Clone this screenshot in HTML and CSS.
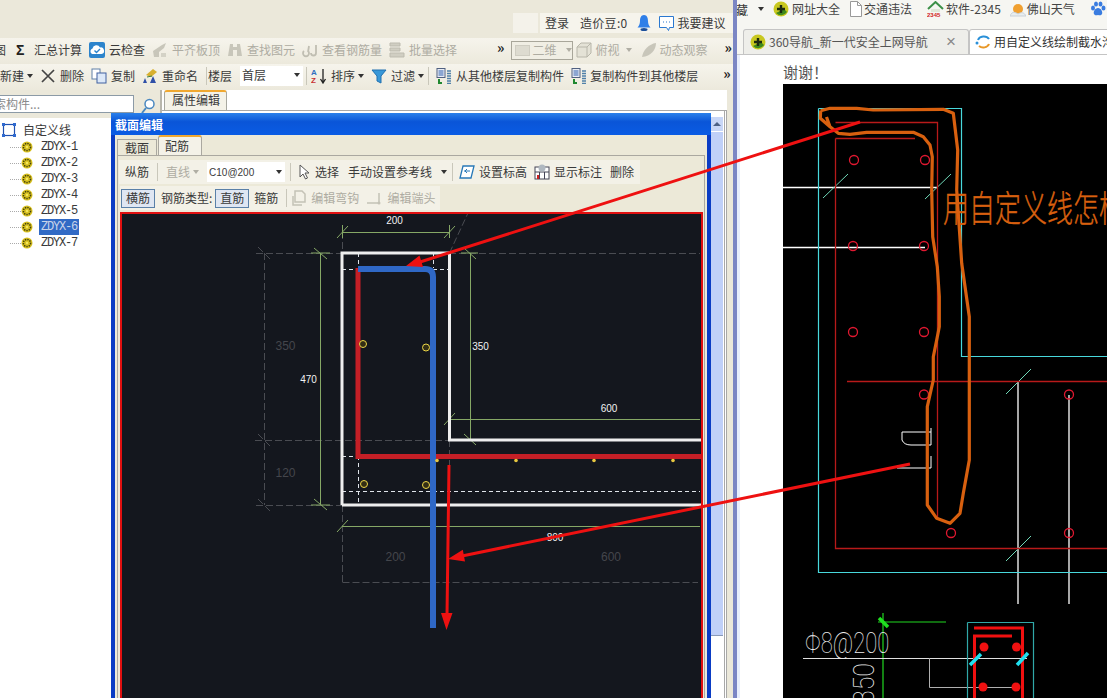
FILE: index.html
```html
<!DOCTYPE html>
<html lang="zh">
<head>
<meta charset="utf-8">
<title>截面编辑</title>
<link rel="stylesheet" href="styles.css">
</head>
<body>
<svg class="defs" width="0" height="0">
  <symbol id="gear" viewBox="0 0 12 12"><circle cx="6" cy="6" r="5.500" fill="#d8c020"/><circle cx="6" cy="6" r="3.600" fill="none" stroke="#40400c" stroke-width="1.500" stroke-dasharray="1.400 1"/><circle cx="6" cy="6" r="1.200" fill="#f4e860"/></symbol>
  <symbol id="nav360" viewBox="0 0 16 16"><circle cx="8" cy="8" r="7.500" fill="#c8c820"/><path d="M3 12a7 7 0 0 0 11-1l-3-3z" fill="#3f8a1c"/><path d="M8 4v8M4 8h8" stroke="#1c2a10" stroke-width="2.400"/></symbol>
  <symbol id="floors" viewBox="0 0 16 16"><rect x="1" y="0.500" width="8" height="9" fill="#e8ecf4" stroke="#506080"/><path d="M2.500 3h5M2.500 5h5M2.500 7h5" stroke="#3060b0"/><path d="M11 3h4M11 5.500h4M11 8h4M11 10.500h4M11 13h4M11 15.500h4" stroke="#5080a8" stroke-width="1.300"/><path d="M3 11v4h3" stroke="#208830" stroke-width="2" fill="none"/></symbol>
</svg>

<div class="app">
  <div class="app-top">
    <span class="top-blank"></span>
    <div class="top-bar">
      <span class="login">登录</span>
      <span class="beans">造价豆:0</span>
      <svg class="bell" width="14" height="18" viewBox="0 0 14 18"><path d="M7 1C4 1 3 4 3 7c0 3-1 5-2.500 6.500h13C12 12 11 10 11 7c0-3-1-6-4-6z" fill="#2f7fe8"/><ellipse cx="7" cy="15.500" rx="3.500" ry="1.500" fill="#1b4f9a"/></svg>
      <svg class="bubble" width="17" height="17" viewBox="0 0 17 17"><path d="M1.500 1.500h14v11h-4l-1 3-2-3h-7z" fill="#fff" stroke="#2a78d0"/><path d="M5 7h1M8 7h1M11 7h1" stroke="#2a78d0"/></svg>
      <span>我要建议</span>
    </div>
  </div>

  <div class="toolbar tb-one">
    <span class="clipped-left">图</span>
    <span class="tool"><span class="sigma">Σ</span><span class="tool-text-wide">汇总计算</span></span>
    <span class="tool"><svg width="16" height="16" viewBox="0 0 16 16"><rect width="16" height="16" rx="2" fill="#2c84cc"/><path d="M3 12a3 3 0 0 1 .5-5.500A4 4 0 0 1 11 5.500a3.200 3.200 0 0 1 1.500 6.500z" fill="#fff"/><path d="M5.500 8.500l2 2 3.500-3.500" stroke="#2c84cc" stroke-width="1.400" fill="none"/></svg><span>云检查</span></span>
    <span class="tool off"><svg width="16" height="16" viewBox="0 0 16 16"><path d="M1 9l9-6 4-2-2 5-5 4v5H2z" fill="#c8c6ba"/><path d="M9 11h5v4H9z" fill="#d4d2c6"/></svg><span>平齐板顶</span></span>
    <span class="tool off"><svg width="16" height="16" viewBox="0 0 16 16"><path d="M3 2h3v3h4V2h3l2 12h-5V8H6v6H1z" fill="#c8c6ba"/></svg><span>查找图元</span></span>
    <span class="tool off"><svg width="16" height="16" viewBox="0 0 16 16"><path d="M2 9a3 3 0 1 0 4 0M7 4l-1 6M14 3v8a2.500 2.500 0 0 1-5 0" stroke="#c0beb2" stroke-width="1.800" fill="none"/></svg><span>查看钢筋量</span></span>
    <span class="tool off"><svg width="16" height="16" viewBox="0 0 16 16"><path d="M1 1h10v3H1zM1 6h10v3H1zM1 11h14v4H1z" fill="#d0cec2" stroke="#bdbbaf"/></svg><span>批量选择</span></span>
    <span class="more more-a">»</span>
    <span class="combo-2d"><span class="combo-swatch"></span><span class="nowrap">二维</span><span class="caret"></span></span>
    <span class="tool off tool-tight-l"><svg width="16" height="16" viewBox="0 0 16 16"><path d="M1 5l4-4h10v10l-4 4H1z" fill="#e4e2d6" stroke="#b8b6aa"/><path d="M1 5h10v10M11 5l4-4" stroke="#b8b6aa" fill="none"/></svg><span>俯视</span><span class="caret"></span></span>
    <span class="tool off tool-orbit"><svg width="16" height="16" viewBox="0 0 16 16"><path d="M1 15C2 8 8 2 15 1c0 7-5 13-14 14z" fill="#c8c6ba"/></svg><span>动态观察</span></span>
    <span class="more more-b">»</span>
  </div>

  <div class="toolbar tb-two">
    <span class="tool tool-drop"><span>新建</span><span class="caret dark"></span></span>
    <span class="tool"><svg width="16" height="16" viewBox="0 0 16 16"><path d="M2 2l12 12M14 2L2 14" stroke="#444" stroke-width="1.700"/></svg><span>删除</span></span>
    <span class="tool"><svg width="16" height="16" viewBox="0 0 16 16"><rect x="1" y="1" width="8" height="10" fill="#fff" stroke="#6080a8"/><rect x="6" y="5" width="9" height="10" fill="#dce8f8" stroke="#4060a0"/></svg><span>复制</span></span>
    <span class="tool"><svg width="16" height="16" viewBox="0 0 16 16"><path d="M4 7l7-6 4 3-6 5z" fill="#d8b030"/><path d="M1 15l2-5 2 5zM8 15l3-7 3 7z" fill="#3050a8"/><path d="M5 9l5-1" stroke="#408040"/></svg><span>重命名</span></span>
    <span class="sep sep-floor"></span>
    <span>楼层</span>
    <span class="combo-floor"><span>首层</span><span class="caret dark"></span></span>
    <span class="sep"></span>
    <span class="tool"><svg width="16" height="16" viewBox="0 0 16 16"><text x="0" y="7" class="az-a">A</text><text x="0" y="15" class="az-z">Z</text><path d="M12 1v13M9.500 11l2.500 4 2.500-4" stroke="#222" fill="none" stroke-width="1.300"/></svg><span class="tool-text-drop">排序<span class="caret dark"></span></span></span>
    <span class="tool"><svg width="16" height="16" viewBox="0 0 16 16"><path d="M1 2h14l-5 6v7l-4-2V8z" fill="#3898d8" stroke="#2070b0"/></svg><span class="tool-text-drop">过滤<span class="caret dark"></span></span></span>
    <span class="sep"></span>
    <span class="tool tool-pad"><svg width="16" height="16"><use href="#floors"/></svg><span>从其他楼层复制构件</span></span>
    <span class="tool tool-close"><svg width="16" height="16"><use href="#floors"/></svg><span>复制构件到其他楼层</span></span>
    <span class="more more-c">»</span>
  </div>

  <div class="app-main">
    <aside class="side">
      <div class="search-row">
        <span class="search-box">索构件...</span>
        <svg width="16" height="16" viewBox="0 0 16 16"><circle cx="9.500" cy="6" r="4.500" fill="#fff" stroke="#4a88c0" stroke-width="1.500"/><path d="M6 10l-4 5" stroke="#4a88c0" stroke-width="2"/></svg>
      </div>
      <ul class="tree">
        <li class="tree-root"><svg width="14" height="14" viewBox="0 0 14 14"><rect x="1.500" y="1.500" width="11" height="11" fill="none" stroke="#2050b0" stroke-width="1.200"/><path d="M0 0h3v3H0zM11 0h3v3h-3zM0 11h3v3H0zM11 11h3v3h-3z" fill="#2f6ad0"/></svg><span>自定义线</span></li>
        <li class="tree-item"><svg width="12" height="12"><use href="#gear"/></svg><span>ZDYX-1</span></li>
        <li class="tree-item"><svg width="12" height="12"><use href="#gear"/></svg><span>ZDYX-2</span></li>
        <li class="tree-item"><svg width="12" height="12"><use href="#gear"/></svg><span>ZDYX-3</span></li>
        <li class="tree-item"><svg width="12" height="12"><use href="#gear"/></svg><span>ZDYX-4</span></li>
        <li class="tree-item"><svg width="12" height="12"><use href="#gear"/></svg><span>ZDYX-5</span></li>
        <li class="tree-item"><svg width="12" height="12"><use href="#gear"/></svg><span class="selected">ZDYX-6</span></li>
        <li class="tree-item"><svg width="12" height="12"><use href="#gear"/></svg><span>ZDYX-7</span></li>
      </ul>
    </aside>
    <section class="props">
      <div class="props-tabs"><span class="props-tab">属性编辑</span></div>
      <div class="props-body">
        <div class="scrollbar"><span class="scroll-up"></span><span class="scroll-track"></span></div>
      </div>
    </section>
  </div>
</div>

<div class="divider"></div>

<div class="browser">
  <div class="bookmarks">
    <span class="clipped-left bm-first">藏</span>
    <span class="caret dark bm-caret"></span>
    <span class="bm bm-a"><svg width="16" height="16"><use href="#nav360"/></svg><span>网址大全</span></span>
    <span class="bm bm-b"><svg width="12" height="16" viewBox="0 0 12 16"><path d="M.5.500h7l4 4v11H.5z" fill="#fff" stroke="#999"/><path d="M7.500.500v4h4" fill="none" stroke="#999"/></svg><span>交通违法</span></span>
    <span class="bm bm-c"><svg width="17" height="16" viewBox="0 0 17 16"><path d="M1 8l7.500-7L16 8" fill="none" stroke="#3c9048" stroke-width="2"/><path d="M4 8h9v3H4z" fill="#dfe8d8"/><text x="0" y="16" class="house-num">2345</text></svg><span>软件-2345</span></span>
    <span class="bm bm-d"><svg width="16" height="16" viewBox="0 0 16 16"><circle cx="8" cy="8" r="5" fill="#f0a030"/><path d="M0 15c2-5 5-4 8-2 3-2 6-2 8 2z" fill="#e8eef0" stroke="#c8d0d8"/></svg><span>佛山天气</span></span>
    <span class="bm bm-e"><svg width="16" height="16" viewBox="0 0 16 16" fill="#3a7ce0"><ellipse cx="3" cy="7" rx="2" ry="2.600"/><ellipse cx="6" cy="3" rx="2" ry="2.600"/><ellipse cx="10.500" cy="3" rx="2" ry="2.600"/><ellipse cx="13.500" cy="7" rx="2" ry="2.600"/><path d="M8 7c-3 0-5 4-4 6s3 1 4 1 3 1 4-1-1-6-4-6z"/></svg></span>
  </div>
  <div class="browser-tabs">
    <div class="b-tab">
      <svg width="16" height="16"><use href="#nav360"/></svg>
      <span class="b-tab-title">360导航_新一代安全上网导航</span>
      <span class="b-tab-x">×</span>
    </div>
    <div class="b-tab b-tab-active">
      <svg width="16" height="16" viewBox="0 0 16 16"><path d="M3 6a6 5 0 0 1 11-1" fill="none" stroke="#2a90d8" stroke-width="2"/><path d="M14 10a6 5 0 0 1-10 2" fill="none" stroke="#e89828" stroke-width="2"/><circle cx="2" cy="9" r="1.500" fill="#2a90d8"/></svg>
      <span class="b-tab-title">用自定义线绘制截水沟</span>
    </div>
  </div>
  <div class="article">
    <p class="thanks">谢谢！</p>
    <svg class="cad" width="324" height="614" viewBox="783 84 324 614">
      <rect x="783" y="84" width="324" height="614" fill="#000"/>
      <g fill="none" stroke="#fff" stroke-width="1.300">
        <path d="M783 187.500H937M783 247.500H925M1018 381V604M1069 395V604"/>
        <path d="M931 432H902V440Q904 445 911 445H931V428M931 456V468H897" stroke-width="1"/>
      </g>
      <g fill="none" stroke="#48d8dc" stroke-width="1.200">
        <path d="M818.500 108.500H961.500V356.500H1107M818.500 108.500V572.500H1107"/>
        <path d="M823 198L848 174M925 199L951 174M1006 394L1031 369M1006 561L1031 536" stroke="#70d8b8" stroke-width="1"/>
      </g>
      <g fill="none" stroke="#b81a1a" stroke-width="1.300">
        <path d="M835.500 122.500H937.500V520M835.500 138.500H915M835.500 138.500V548.500H1107M847 381.500H1107"/>
        <g stroke="#e01830">
          <circle cx="854" cy="160" r="4.500"/><circle cx="925" cy="160" r="4.500"/>
          <circle cx="853" cy="246" r="4.500"/><circle cx="924" cy="246" r="4.500"/>
          <circle cx="853" cy="332" r="4.500"/><circle cx="924" cy="332" r="4.500"/>
          <circle cx="924" cy="394.500" r="4.500"/><circle cx="951" cy="533" r="4.500"/>
          <circle cx="1069" cy="394.500" r="4.500"/><circle cx="1069" cy="533" r="4.500"/>
        </g>
      </g>
      <text class="cad-title" transform="translate(943 222) scale(1 1.400)">用自定义线怎样</text>
      <path class="scribble" d="M820.700 110.700L820.300 118.300L830 126.700L838.300 133.300L850 134.300L866.700 132.300H913.300L923.300 136.700L930 145L932.300 156.700L931.700 190L932.700 236.700L937.300 266.700L939.300 296.700V326.700L936.700 340L933.300 356.700V380L927.300 406.700V505L936.700 518.300L950 523.300L960 513.300L963.300 493.300L969.300 460V340V316.700L961.700 263.300L956.700 190L957.700 150L953.300 113.300L943.300 109.300L873.300 110L856.700 108.300H830L820.700 110.700M826.500 117L830 126.700"/>
      <g fill="none">
        <path d="M883 613V698M878 622H946" stroke="#20d820" stroke-width="1.200"/>
        <path d="M879 618L888 627" stroke="#20e020" stroke-width="3.500"/>
        <path d="M803 658.500H1027" stroke="#e0e0e0" stroke-width="1"/>
        <path d="M929.500 658V687.500H1017" stroke="#b0b0b0" stroke-width="1"/>
        <path d="M967.500 622.500H1033.500V698M967.500 622.500V698" stroke="#30a8a8" stroke-width="1.200"/>
        <path d="M974 628H1022.500V698M1012 636H974.500V698" stroke="#f01010" stroke-width="3"/>
        <path d="M970 665L981 654M1017 665L1028 653" stroke="#20e0f0" stroke-width="3.500"/>
      </g>
      <g fill="#f01010"><circle cx="984" cy="647" r="4.500"/><circle cx="1016.500" cy="647" r="4.500"/><circle cx="983" cy="687" r="4.500"/><circle cx="1016" cy="687" r="4.500"/></g>
      <text class="cad-rebar" transform="translate(805 653) scale(.88 1.150)">Φ8@200</text>
      <text class="cad-rebar" text-anchor="end" transform="translate(874 663) rotate(-90) scale(1 1.150)">350</text>
    </svg>
  </div>
</div>

<div class="dialog">
  <div class="dialog-title">截面编辑</div>
  <div class="dialog-tabs">
    <span class="d-tab">截面</span>
    <span class="d-tab d-tab-active">配筋</span>
  </div>
  <div class="dialog-panel">
    <div class="d-row d-row-one">
      <span>纵筋</span>
      <span class="sep-d"></span>
      <span class="tool off tool-drop"><span>直线</span><span class="caret"></span></span>
      <span class="combo-rebar"><span>C10@200</span><span class="caret dark"></span></span>
      <span class="sep-d sep-tight"></span>
      <span class="tool"><svg width="12" height="16" viewBox="0 0 12 16"><path d="M1 1v12l3-3 2.500 5 2-1-2.500-5h4z" fill="#fff" stroke="#555"/></svg><span>选择</span></span>
      <span class="tool tool-drop tool-refs"><span>手动设置参考线</span><span class="caret dark"></span></span>
      <span class="sep-d sep-tight"></span>
      <span class="tool nudge"><svg width="16" height="16" viewBox="0 0 16 16"><path d="M4 2h11l-3 12H1z" fill="#fff" stroke="#2878b8" stroke-width="1.300"/><path d="M5 7h6M8 5l-2 2 2 2" stroke="#2878b8" fill="none"/></svg><span>设置标高</span></span>
      <span class="tool tool-marks"><svg width="16" height="16" viewBox="0 0 16 16"><rect x="1" y="3" width="14" height="12" fill="#fff" stroke="#445"/><path d="M1 8h14M5.500 8v7M10.500 8v7" stroke="#445"/><circle cx="8" cy="4" r="3.500" fill="#b0b8c0"/><rect x="3" y="11" width="2" height="4" fill="#d02020"/></svg><span>显示标注</span></span>
      <span>删除</span>
    </div>
    <div class="d-row d-row-two">
      <span class="press">横筋</span>
      <span class="rebar-label">钢筋类型:</span>
      <span class="press">直筋</span>
      <span>箍筋</span>
      <span class="sep-d sep-wide"></span>
      <span class="tool off tool-edit"><svg width="16" height="16" viewBox="0 0 16 16"><path d="M3 1h7l3 3v8H3z" fill="none" stroke="#c4c2b6" stroke-width="1.500"/><path d="M1 6v9h9" fill="none" stroke="#c4c2b6" stroke-width="1.500"/></svg><span>编辑弯钩</span></span>
      <span class="tool off tool-end"><svg width="16" height="16" viewBox="0 0 16 16"><path d="M1 13h13M13 3v10" fill="none" stroke="#c4c2b6" stroke-width="1.500"/><circle cx="13" cy="13" r="1.500" fill="#c4c2b6"/></svg><span>编辑端头</span></span>
    </div>
    <div class="canvas">
      <svg class="canvas-svg" width="579" height="484" viewBox="122 214 579 484">
        <g class="dim-grey">
          <path d="M264.500 253V505M256 253.500H342M449 253.500H700M255 440.500H449M256 505.500H342M342.500 505V582M342.500 582.500H698M449.500 253L468 213M342.500 232V253M449.500 440V466"/>
          <path d="M258 247L270 259M258 434L270 446M258 499L270 511"/>
        </g>
        <g class="dim-white">
          <path d="M342 269.500H449M342 491.500H700M342 456.500H358M358.500 253V268M358.500 456V505M433.500 253V268"/>
        </g>
        <g class="dim-green">
          <path d="M342 232.500H449M320.500 253V505M470.500 253V440M449 419.500H700M342 526.500H700M342.500 225V238M449.500 225V238"/>
          <path d="M337 238L348 226M444 238L455 226M314 248L327 259M314 499L327 510M464 248L476 259M464 434L476 445M444 425L455 413M337 532L348 520"/>
          <path d="M311 253H330M311 505H330M461 253H478M461 440H478"/>
        </g>
        <path class="steel-white" d="M342 505V253H449.500V440H701M342 505H701"/>
        <path class="steel-red" d="M358 268V456.500H701"/>
        <path class="steel-blue" d="M358 269H425Q433 269 433 277V628"/>
        <g class="rebar-ring">
          <circle cx="363" cy="344" r="3.500"/><circle cx="426" cy="347.500" r="3.500"/>
          <circle cx="364" cy="484" r="3.500"/><circle cx="426" cy="485" r="3.500"/>
        </g>
        <g class="rebar-dot">
          <circle cx="437" cy="460.500" r="1.800"/><circle cx="516" cy="460.500" r="1.800"/>
          <circle cx="594" cy="460.500" r="1.800"/><circle cx="673" cy="460.500" r="1.800"/>
        </g>
        <g class="dim-label">
          <text x="394.500" y="224">200</text>
          <text x="308.500" y="383">470</text>
          <text x="480.500" y="350">350</text>
          <text x="609" y="412">600</text>
          <text x="555" y="541">800</text>
        </g>
        <g class="dim-label faint">
          <text x="285.500" y="350">350</text>
          <text x="285.500" y="477">120</text>
          <text x="395.500" y="561">200</text>
          <text x="611" y="561">600</text>
        </g>
      </svg>
    </div>
  </div>
</div>

<svg class="overlay" width="1107" height="698" viewBox="0 0 1107 698">
  <path d="M860 122L420 262M910 464L462 556M449 465L447 616" fill="none" stroke="#ee1111" stroke-width="3"/>
  <path d="M406 266L423 267L419.500 255.500zM448 559L465 561.600L462.800 549.800zM446.500 630L441 613H452.500z" fill="#ee1111"/>
</svg>
</body>
</html>
```

FILE: styles.css
```css
* { box-sizing: border-box; }
html, body { margin: 0; padding: 0; height: 698px; overflow: hidden; }
body {
  position: relative;
  display: flex;
  width: 1107px;
  background: #fff;
  font: 12px/1 "Noto Sans CJK SC", "Liberation Sans", sans-serif;
  color: #3a3a3a;
}
.defs { position: absolute; }
svg { display: block; flex: none; }
.nowrap { white-space: nowrap; }

/* shared */
.tool { display: inline-flex; align-items: center; gap: 4px; flex: none; }
.tool.off { color: #aeaca2; }
.tool-drop { gap: 3px; }
.tool-text-drop { display: inline-flex; align-items: center; gap: 3px; }
.caret { display: inline-block; width: 0; height: 0; border: 3px solid transparent; border-top: 4px solid #b0aea4; border-bottom: 0; flex: none; }
.caret.dark { border-top-color: #333; }
.clipped-left { display: block; width: 6px; overflow: hidden; direction: rtl; flex: none; }
.more { font-size: 14px; font-weight: 700; color: #222; flex: none; line-height: 10px; position: relative; top: -3px; }

/* app window */
.app { width: 733px; height: 698px; flex: none; display: flex; flex-direction: column; background: #ebe8da; }
.app-top { height: 38px; display: flex; justify-content: flex-end; align-items: flex-end; padding-bottom: 5px; flex: none; }
.top-blank { width: 25px; height: 20px; background: #f4f2ea; margin-right: 2px; }
.top-bar { width: 193px; height: 20px; background: #f6f4ec; display: flex; align-items: center; padding-left: 5px; }
.beans { margin-left: 11px; letter-spacing: .3px; }
.bell { margin-left: 9px; }
.bubble { margin-left: 7px; margin-right: 3px; }

.toolbar { height: 26px; display: flex; align-items: center; gap: 7px; flex: none; padding-bottom: 2px; background: linear-gradient(#f6f4ec, #ece9dc); }
.tb-one .clipped-left { margin-right: 3px; }
.sigma { width: 14px; margin-right: 0; font: 700 14px "Liberation Sans", sans-serif; color: #222; }
.more-a { margin-left: 33px; }
.combo-2d { width: 62px; height: 19px; margin-left: -1px; display: flex; align-items: center; gap: 3px; padding: 0 3px; border: 1px solid #a8a69a; background: #f0eee4; color: #aeaca2; flex: none; }
.combo-2d .caret { margin-left: 6px; }
.combo-swatch { width: 15px; height: 11px; background: #dddbd0; border: 1px solid #cfcdc2; flex: none; }
.tool-tight-l { margin-left: -4px; }
.tool-tight-l .caret { margin-left: 2px; }
.tool-orbit { gap: 3px; margin-left: 2px; }
.more-b { margin-left: 10px; }

.sep { width: 1px; height: 18px; background: #c9c7ba; margin: 0 -3px; flex: none; }
.sep-floor { margin: 0 -6px 0 1px; }
.combo-floor { width: 63px; height: 20px; background: #fff; display: flex; align-items: center; justify-content: space-between; padding: 0 3px 2px 2px; margin-left: 1px; margin-right: -1px; flex: none; }
.az-a { font: 700 8px "Liberation Sans", sans-serif; fill: #3070c0; }
.az-z { font: 700 8px "Liberation Sans", sans-serif; fill: #c83030; }
.house-num { font: 700 6px "Liberation Sans", sans-serif; fill: #d02020; }
.tool-pad { margin-left: 3px; }
.tool-close { gap: 3px; }
.more-c { margin-left: 18px; }

.app-main { flex: 1; display: flex; min-height: 0; }
.side { width: 160px; flex: none; }
.search-row { height: 28px; display: flex; align-items: flex-start; padding-top: 5px; gap: 6px; }
.search-box { width: 134px; height: 18px; background: #fff; border: 1px solid #8c9aa6; border-left: 0; color: #8a8a8a; line-height: 16px; text-indent: -6px; overflow: hidden; white-space: nowrap; }
.search-row svg { margin-top: 3px; }
.tree { list-style: none; margin: 0; padding: 3px 0 0; background: #fff; height: 590px; }
.tree li { display: flex; align-items: center; height: 16px; }
.tree-root { gap: 7px; padding-left: 2px; height: 18px !important; }
.tree-item {
  gap: 8px;
  padding-left: 21px;
  font: 12px "Liberation Mono", monospace;
  letter-spacing: -1.200px;
  background: repeating-linear-gradient(90deg, #aaa 0 1px, transparent 1px 2px) 10px 50% / 11px 1px no-repeat;
}
.selected { background: #316ac5; color: #c9d4ea; padding: 1px 2px; margin-left: -2px; letter-spacing: -1.200px; }

.props { flex: 1; display: flex; flex-direction: column; padding-right: 6px; border-left: 2px solid #b8b6ac; }
.props-tabs { height: 21px; padding-left: 2px; background: #fff; border-bottom: 1px solid #a8a8a8; flex: none; display: flex; }
.props-tab { width: 63px; height: 21px; background: #f4f2e8; border: 1px solid #a8a8a0; border-top: 2px solid #f0a830; border-radius: 3px 3px 0 0; padding: 2px 0 0 7px; }
.props-body { flex: 1; background: #fff; border-right: 3px double #a8a8a8; display: flex; justify-content: flex-end; padding-top: 6px; padding-right: 1px; }
.scrollbar { width: 13px; display: flex; flex-direction: column; }
.scroll-up { height: 15px; background: #c8d6f6; border-bottom: 1px solid #fff; display: block; position: relative; }
.scroll-up::before { content: ""; position: absolute; left: 3px; top: 5px; border: 4px solid transparent; border-bottom: 4px solid #4d6185; border-top: 0; }
.scroll-track { height: 504px; background: #c0d0f8; border-bottom: 1px solid #8a9ab8; display: block; }

.divider { width: 4px; flex: none; background: #7b86c4; }

/* browser */
.browser { flex: 1; min-width: 0; display: flex; flex-direction: column; background: #fff; }
.bookmarks { height: 28px; display: flex; align-items: center; background: #f6f6f2; flex: none; padding-bottom: 10px; overflow: hidden; }
.bm-first { width: 11px; font-size: 13px; }
.bm-caret { margin-left: 10px; border-top-color: #555; }
.bm { display: inline-flex; align-items: center; gap: 3px; flex: none; color: #444; }
.bm-a { margin-left: 9px; }
.bm-b { margin-left: 10px; gap: 2px; }
.bm-c { margin-left: 15px; gap: 2px; }
.bm-d { margin-left: 9px; gap: 1px; }
.bm-e { margin-left: 15px; }
.browser-tabs { height: 27px; display: flex; padding: 1px 0 0 6px; background: #f6f6f2; border-bottom: 1px solid #c4c4c4; flex: none; overflow: hidden; }
.b-tab { width: 226px; height: 26px; flex: none; display: flex; align-items: center; gap: 3px; padding: 0 6px 2px; background: #eeeeea; border: 1px solid #c4c4c4; border-bottom: 0; border-radius: 3px 3px 0 0; color: #555; }
.b-tab-title { white-space: nowrap; }
.b-tab-x { margin-left: auto; margin-right: 6px; font-size: 17px; color: #888; font-family: "Liberation Sans", sans-serif; }
.b-tab-active { width: 170px; background: #fff; color: #333; padding: 0 5px 2px; }
.article { flex: 1; padding-left: 46px; min-height: 0; background: linear-gradient(90deg, #e8eefc 0 3px, #fff 3px); }
.thanks { margin: 0; height: 29px; padding-top: 9px; font: 15px/1 "Noto Sans CJK JP", sans-serif; color: #555; }
.cad-title { font: 300 26px "Noto Sans CJK SC", sans-serif; fill: #d8600f; stroke: #d8600f; stroke-width: .3; }
.cad-rebar { font: 100 25px Roboto, "Liberation Sans", sans-serif; fill: #eee; }
.scribble { fill: none; stroke: #d8600f; stroke-width: 3.200; stroke-linejoin: round; }

/* dialog */
.dialog { position: absolute; left: 111px; top: 113px; width: 600px; height: 590px; background: #ece9d8; border: 4px solid #0a3cc4; border-top: 0; border-radius: 3px 3px 0 0; }
.dialog-title { height: 22px; margin: 0 -4px; padding: 6px 0 0 4px; background: linear-gradient(#2a80ea, #0a55d8 40%, #0a5ce4); color: #fff; font-weight: 700; }
.dialog-tabs { height: 20px; display: flex; align-items: flex-end; padding-left: 2px; gap: 1px; }
.d-tab { width: 40px; height: 16px; background: #ece9d8; border: 1px solid #aaa8a0; border-bottom: 0; padding: 2px 0 0 7px; }
.d-tab-active { width: 44px; height: 20px; background: #f4f2e8; border-top: 2px solid #f0a830; padding: 3px 0 0 6px; border-radius: 3px 3px 0 0; }
.dialog-panel { margin: 0 2px; border: 1px solid #aaa8a0; padding: 4px 1px 0 2px; height: 560px; }
.d-row { height: 24px; display: flex; align-items: center; gap: 8px; width: max-content; background: #f3f1e7; }
.d-row-one { padding: 0 6px; margin-left: -1px; }
.d-row-two { margin-top: 2px; padding: 0 5px 0 1px; gap: 5px; }
.sep-d { width: 1px; height: 18px; background: #c9c7ba; flex: none; }
.sep-tight { margin-left: -3px; }
.sep-wide { margin-left: 3px; }
.combo-rebar { width: 78px; height: 20px; background: #fff; display: flex; align-items: center; justify-content: space-between; padding: 0 3px 0 2px; font: 10px "Liberation Sans", sans-serif; flex: none; }
.tool-refs .caret { margin-left: 6px; }
.tool-refs { margin-left: 1px; }
.nudge { margin-left: -2px; }
.tool-marks { margin-left: -1px; }
.press { width: 34px; height: 19px; display: flex; align-items: center; justify-content: center; background: #dfe6f2; border: 1px solid #5a80a8; flex: none; }
.rebar-label { margin: 0 -2px 0 1px; }
.tool-edit { gap: 3px; }
.tool-end { gap: 5px; margin-left: 2px; }
.canvas { margin-top: 2px; width: 583px; height: 490px; border: 2px solid #e01010; border-bottom: 0; background: #14171e; overflow: hidden; }
.dim-grey { fill: none; stroke: #4a4c52; stroke-dasharray: 7 3; stroke-width: 1; }
.dim-white { fill: none; stroke: #dfe4ea; stroke-dasharray: 4 3; stroke-width: 1; }
.dim-green { fill: none; stroke: #86a866; stroke-width: 1; }
.steel-white { fill: none; stroke: #eeeeee; stroke-width: 3; }
.steel-red { fill: none; stroke: #c51f26; stroke-width: 5; }
.steel-blue { fill: none; stroke: #2f68c6; stroke-width: 6; }
.rebar-ring { fill: #332e14; stroke: #eed848; stroke-width: 1; }
.rebar-dot { fill: #e8c840; }
.dim-label { font: 10px "Liberation Sans", sans-serif; fill: #f2f2f2; text-anchor: middle; }
.dim-label.faint { fill: #44464c; font-size: 12px; }

.overlay { position: absolute; left: 0; top: 0; pointer-events: none; }
```
